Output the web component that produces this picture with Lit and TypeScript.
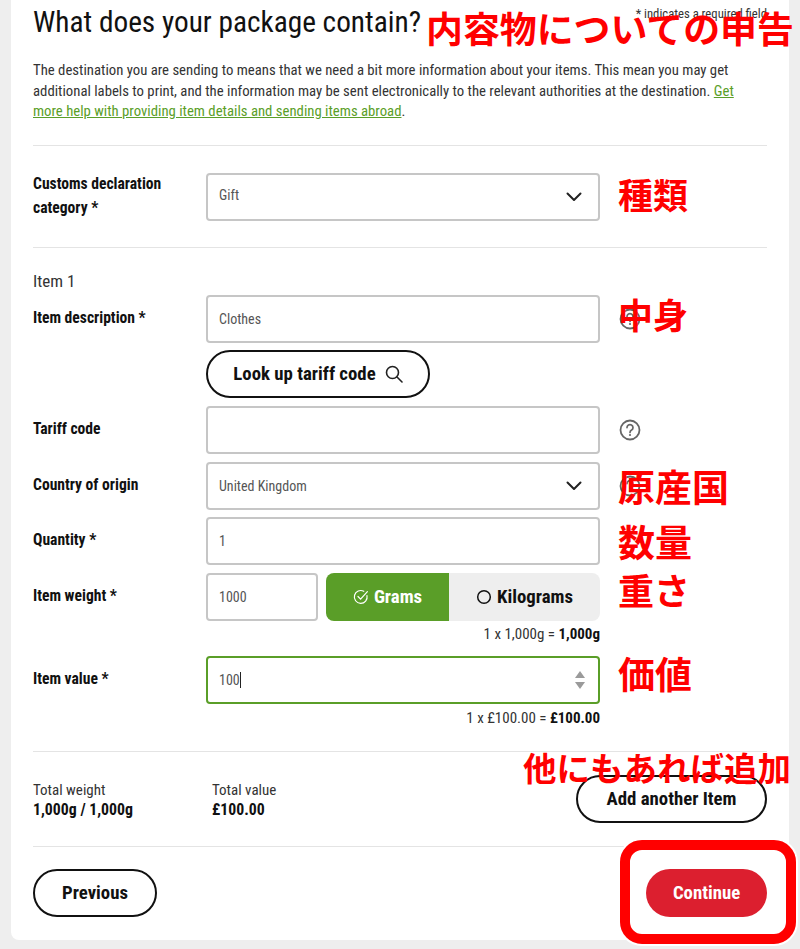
import { LitElement, html, css, svg } from "lit";
import { customElement } from "lit/decorators.js";

const chevron = svg`<svg class="chev" width="16" height="10" viewBox="0 0 16 10"><path d="M1.5 1.5 8 8l6.5-6.5" fill="none" stroke="#222" stroke-width="2" stroke-linecap="round" stroke-linejoin="round"/></svg>`;
const help = svg`<svg width="22" height="22" viewBox="0 0 22 22"><circle cx="11" cy="11" r="9.5" fill="none" stroke="#666" stroke-width="1.8"/><path d="M8 8.6a3 3 0 1 1 4.6 2.5c-1 .6-1.6 1.1-1.6 2.3" fill="none" stroke="#666" stroke-width="1.7" stroke-linecap="round"/><circle cx="11" cy="16" r="1.1" fill="#666"/></svg>`;

@customElement("app-root")
export class AppRoot extends LitElement {
  static styles = css`
    :host { display: block; width: 800px; height: 949px; background: #eeeeee; position: relative; overflow: hidden;
      font-family: Roboto, "Liberation Sans", sans-serif; font-stretch: 80%; color: #333; font-size: 14.5px; }
    .card { margin-left: 11px; width: 778px; height: 940px; box-sizing: border-box; background: #fff; border-radius: 0 0 8px 8px; padding: 0 22px; }
    .head { position: relative; height: 44px; }
    h1 { margin: 0; font-weight: 400; font-size: 29.3px; line-height: 44px; color: #111; }
    .req { position: absolute; right: 0; top: 6px; font-size: 12.7px; line-height: 16px; }
    .intro { margin: 16px 0 0; line-height: 20.5px; height: 61px; font-size: 14.75px; padding-right: 4px; }
    .intro a { color: #5a9e28; text-decoration: underline; }
    hr { border: 0; height: 1px; background: #e4e4e4; margin: 0; }
    .hr1 { margin-top: 23.5px; }
    .grid { display: grid; grid-template-columns: 173px 394px 41px; column-gap: 0; align-items: center; }
    .grid .ic { margin-left: 19px; display: flex; }
    .sec1 { padding: 27px 0 26px; }
    label { font-weight: 700; color: #111; line-height: 24px; font-size: 15.6px; margin-top: -2px; }
    .field { height: 48px; box-sizing: border-box; border: 2px solid #c6c6c6; border-radius: 4px; background: #fff; display: flex; align-items: center; justify-content: space-between; padding: 0 16px 0 11px; color: #555; font-size: 14px; }
    .field.focus { border-color: #5a9e28; }
    .gift { margin-bottom: 3px; }
    .caret { display: inline-block; width: 1px; height: 16px; background: #222; vertical-align: -3px; }
    .item { margin-top: 23px; font-size: 17px; line-height: 20px; height: 20px; color: #333; }
    .rows { margin-top: 4px; }
    .row { margin-bottom: 7.5px; }
    .btnrow { margin: 0 0 8px 173px; display: flex; }
    .pill { height: 48px; box-sizing: border-box; border: 2px solid #111; border-radius: 24px; background: #fff; color: #111; font-weight: 700; font-size: 18.8px; display: inline-flex; align-items: center; justify-content: center; gap: 9px; }
    .look { width: 224px; }
    .weight { display: flex; gap: 8px; }
    .weight .field { width: 112px; }
    .toggle { flex: 1; display: flex; height: 48px; border-radius: 8px; overflow: hidden; font-weight: 700; font-size: 18.8px; }
    .opt { display: flex; align-items: center; justify-content: center; gap: 5px; }
    .on { width: 123px; background: #5a9e28; color: #fff; }
    .off { flex: 1; background: #eeeeee; color: #111; }
    .note { margin-left: 173px; width: 394px; text-align: right; font-size: 15px; line-height: 20px; color: #333; }
    .note b { color: #111; }
    .note1 { margin-top: -4px; height: 32px; }
    .note2 { margin-top: -4px; }
    .hr3 { margin-top: 23.5px; }
    .totals { display: flex; align-items: center; height: 94px; }
    .tot { line-height: 19px; font-size: 15px; margin-top: 2px; }
    .tot b { display: block; color: #111; font-size: 15.8px; }
    .t1 { width: 179px; }
    .add { margin-left: auto; width: 191px; margin-top: 0; }
    .foot { display: flex; justify-content: space-between; padding-top: 22px; }
    .prev { width: 124px; }
    .cont { width: 121px; background: #dc1f2f; border: 0; color: #fff; }
    .overlay span { position: absolute; color: #ff0000; font: 700 35px/1 "Noto Sans CJK JP", sans-serif; white-space: nowrap; }
    .overlay .a0 { left: 426px; top: 9px; font-size: 36.9px; }
    .overlay .a1 { left: 618px; top: 176px; }
    .overlay .a2 { left: 618px; top: 296px; }
    .overlay .a3 { left: 618px; top: 468px; font-size: 37px; }
    .overlay .a4 { left: 618px; top: 523px; font-size: 37px; }
    .overlay .a5 { left: 618px; top: 571px; font-size: 36px; }
    .overlay .a6 { left: 618px; top: 655px; font-size: 37px; }
    .overlay .a7 { left: 523px; top: 750px; font-size: 33.5px; }
    .frame { position: absolute; left: 620px; top: 840px; width: 176px; height: 104px; box-sizing: border-box; border: 10px solid #ff0000; border-radius: 22px; box-shadow: 0 0 0 2px #fff; }
    .spin { margin-right: -3px; }
  `;

  render() {
    return html`
      <div class="card">
        <div class="head">
          <h1>What does your package contain?</h1>
          <div class="req">* indicates a required field</div>
        </div>
        <p class="intro">The destination you are sending to means that we need a bit more information about your items. This mean you may get additional labels to print, and the information may be sent electronically to the relevant authorities at the destination. <a>Get more help with providing item details and sending items abroad</a>.</p>
        <hr class="hr1" />
        <div class="grid sec1">
          <label>Customs declaration<br />category *</label>
          <div class="field"><span class="gift">Gift</span>${chevron}</div>
        </div>
        <hr />
        <div class="item">Item 1</div>
        <div class="rows">
          <div class="grid row">
            <label>Item description *</label>
            <div class="field">Clothes</div>
            <div class="ic">${help}</div>
          </div>
          <div class="btnrow">
            <div class="pill look">Look up tariff code
              <svg width="18" height="18" viewBox="0 0 18 18"><circle cx="7.5" cy="7.5" r="6" fill="none" stroke="#222" stroke-width="1.6"/><path d="m12 12 5 5" stroke="#222" stroke-width="1.6" stroke-linecap="round"/></svg>
            </div>
          </div>
          <div class="grid row">
            <label>Tariff code</label>
            <div class="field"></div>
            <div class="ic">${help}</div>
          </div>
          <div class="grid row">
            <label>Country of origin</label>
            <div class="field"><span>United Kingdom</span>${chevron}</div>
            <div class="ic">${help}</div>
          </div>
          <div class="grid row">
            <label>Quantity *</label>
            <div class="field">1</div>
          </div>
          <div class="grid row">
            <label>Item weight *</label>
            <div class="weight">
              <div class="field">1000</div>
              <div class="toggle">
                <div class="opt on">
                  <svg width="16" height="16" viewBox="0 0 16 16"><path d="M14 6.6A6.4 6.4 0 1 1 10.8 2.3" fill="none" stroke="#fff" stroke-width="1.2" stroke-linecap="round"/><path d="m5 7.5 2.6 2.6L14.4 2.6" fill="none" stroke="#fff" stroke-width="1.2" stroke-linecap="round"/></svg>
                  Grams
                </div>
                <div class="opt off">
                  <svg width="16" height="16" viewBox="0 0 16 16"><circle cx="8" cy="8" r="6.3" fill="none" stroke="#111" stroke-width="1.5"/></svg>
                  Kilograms
                </div>
              </div>
            </div>
          </div>
          <div class="note note1">1 x 1,000g = <b>1,000g</b></div>
          <div class="grid row">
            <label>Item value *</label>
            <div class="field focus">
              <span>100<i class="caret"></i></span>
              <svg class="spin" width="10" height="20" viewBox="0 0 10 20"><path d="M5 1 10 8H0z" fill="#9a9a9a"/><path d="M5 19 0 12h10z" fill="#9a9a9a"/></svg>
            </div>
          </div>
          <div class="note note2">1 x £100.00 = <b>£100.00</b></div>
        </div>
        <hr class="hr3" />
        <div class="totals">
          <div class="tot t1">Total weight<b>1,000g / 1,000g</b></div>
          <div class="tot">Total value<b>£100.00</b></div>
          <div class="pill add">Add another Item</div>
        </div>
        <hr />
        <div class="foot">
          <div class="pill prev">Previous</div>
          <div class="pill cont">Continue</div>
        </div>
      </div>
      <div class="overlay">
        <span class="a0">内容物についての申告</span>
        <span class="a1">種類</span>
        <span class="a2">中身</span>
        <span class="a3">原産国</span>
        <span class="a4">数量</span>
        <span class="a5">重さ</span>
        <span class="a6">価値</span>
        <span class="a7">他にもあれば追加</span>
      </div>
      <div class="frame"></div>
    `;
  }
}
